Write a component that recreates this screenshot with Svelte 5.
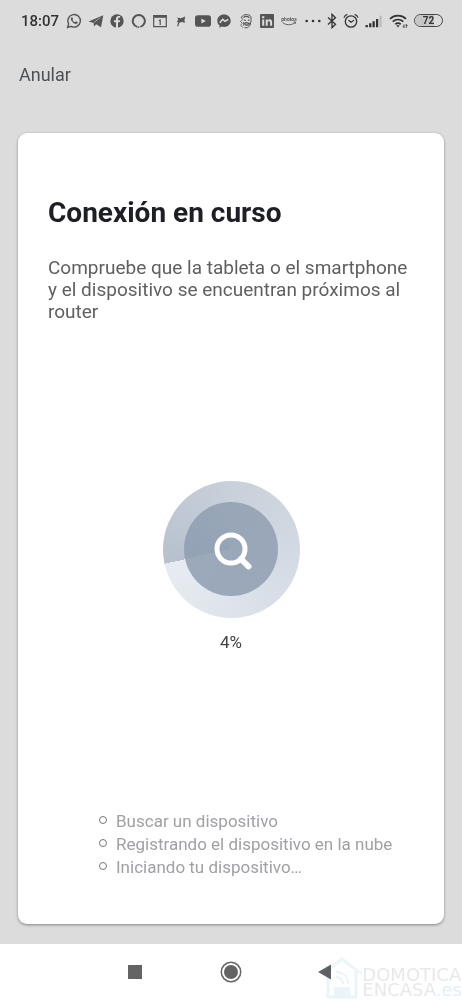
<script lang="ts">
  const title = "Conexión en curso";
  const steps = [
    "Buscar un dispositivo",
    "Registrando el dispositivo en la nube",
    "Iniciando tu dispositivo…"
  ];

  let progress = $state(4);
  let battery = $state(72);
</script>

<div class="screen">
  <header class="status">
    <time>18:07</time>

    <div class="apps">
      <svg viewBox="0 0 16 16" fill="none" stroke="currentColor">
        <path d="M1.600 14.400l1-3.500a6.300 6.300 0 1 1 2.400 2.400z" stroke-width="1.400" />
        <path d="M5.400 4.400c-1 1-.6 2.400.4 3.800 1.300 1.900 3.200 3 4.700 2.600 1-.3 1.400-1 1.200-1.600l-1.700-.9-1 1c-1.200-.5-2-1.300-2.500-2.400l.6-.9-.8-1.700z" fill="currentColor" stroke="none" />
      </svg>
      <svg viewBox="0 0 16 16" fill="currentColor">
        <path d="M.6 8.400L15.300 2.200 13 14.200 8.200 11.200 6 13.400 5.600 10z" />
        <path d="M5.700 9.700l6.500-4.900" stroke="#dcdcdc" stroke-width=".6" />
      </svg>
      <svg viewBox="0 0 16 16">
        <circle cx="8" cy="8" r="6.700" fill="currentColor" />
        <path d="M7 15V9.300H5V7.200h2V5.700c0-1.900 1-2.800 2.700-2.800h1.400v1.900h-1c-.8 0-1.100.4-1.100 1.100v1.300h2.100l-.4 2.100H9V15z" fill="#dcdcdc" />
      </svg>
      <svg viewBox="0 0 16 16" fill="none" stroke="currentColor" stroke-width="2">
        <path d="M6.300 13.900a6 6 0 1 1 3 0M7 13.700l1 .8" />
      </svg>
      <svg viewBox="0 0 16 16" fill="none" stroke="currentColor">
        <path d="M1.700 2.500h12.600v11.200H1.700z" stroke-width="1.200" />
        <path d="M1.700 3.500h12.600" stroke-width="2.600" />
        <path d="M6.800 7.800l1.400-.8v5" stroke-width="1.200" />
      </svg>
      <svg viewBox="0 0 16 16" fill="currentColor">
        <path d="M4.200 4.600l3.600.6 4.500-1.800-.9 3.800.7 2.600-3.200-.8-2.500.8-1.300 3.700-1-.3 1-3.900-1.500-.6 1.700-1.600z" />
      </svg>
      <svg viewBox="0 0 16 16">
        <rect x="0" y="2.300" width="16" height="11.400" rx="2.800" fill="currentColor" />
        <path d="M6.400 5.500v5L10.800 8z" fill="#dcdcdc" />
      </svg>
      <svg viewBox="0 0 16 16">
        <path d="M8 1.400c-3.800 0-6.700 2.700-6.700 6.300 0 2 .8 3.700 2.200 4.800v2.300l2.200-1.200c5 1.300 9-1.700 9-5.900 0-3.600-2.900-6.300-6.700-6.300z" fill="currentColor" />
        <path d="M3.700 9.700l3-3.300 2.400 2 3.200-2" fill="none" stroke="#dcdcdc" stroke-width="1.500" />
      </svg>
      <svg viewBox="0 0 16 16" fill="none" stroke="currentColor">
        <path d="M3.500 5C4 1.500 9 .8 12 2.500c1.700 1.500.7 3.300 1.100 5.100l-.9 4.400-2.500 2.700H6.500" />
        <path d="M5.500 4.500c2-1.600 4-1.200 6 .3M6 7l2 .5m2 0l1.500-.6M6.500 10.500c1.500-1 3-1 4.200 0l-1.200 1.700H7.800z" stroke-width="1.200" />
        <path d="M3.300 4.500l1.500 2-2.300 2 1.800 1.800-1.600 1.900L5 14.700M5.500 9l.3 4M12 9.500l-1.300 3" stroke-width=".8" />
      </svg>
      <svg viewBox="0 0 16 16">
        <rect x="1" y="1" width="14" height="14" rx="1" fill="currentColor" />
        <path d="M3.200 6.500h2v6.300h-2zM3.100 3.200h2.200v2.100H3.100zM6.700 6.500h2v.9c1.300-1.800 4.400-1.300 4.400 1.700v3.700h-2V9.600c0-2-2.400-1.900-2.400 0v3.200h-2z" fill="#dcdcdc" />
      </svg>
      <svg viewBox="0 0 16 16">
        <text x="8" y="7.500" text-anchor="middle" font-size="5" font-weight="700" fill="currentColor">photos</text>
        <path d="M1.500 9.500c3.500 2.900 8.800 2.900 12.200.4M12.400 9h2.300l-.8 2" fill="none" stroke="currentColor" stroke-width=".9" />
      </svg>
    </div>

    <div class="system">
      <svg width="16" height="16" fill="currentColor">
        <circle cx="1.700" cy="8" r="1.300" /><circle cx="8" cy="8" r="1.300" /><circle cx="14.300" cy="8" r="1.300" />
      </svg>
      <svg width="10" height="16" fill="none" stroke="currentColor" stroke-width="1.300">
        <path d="M1 4.500l7.500 6.800L5 14.700V1.300l3.500 3.400L1 11.500" />
      </svg>
      <svg width="16" height="16" fill="none" stroke="currentColor" stroke-width="1.300">
        <circle cx="8" cy="8.500" r="5.700" />
        <path d="M5.500 7.300L8 9.300l3-2M1 4.600C1.500 3 2.600 1.900 4.300 1.300M15 4.600c-.5-1.600-1.600-2.700-3.300-3.300" />
      </svg>
      <svg width="18" height="16" fill="currentColor">
        <path d="M.5 12h2.400v2.200H.5zM4.100 10.300h2.300v3.900H4.100zM7.500 8.300h2.300v5.900H7.500zM11 6h2.200v8.200H11z" />
        <path d="M14.600 2.700h2v11.500h-2z" fill="#b9b9b9" />
      </svg>
      <svg width="19" height="16" fill="none" stroke="currentColor" stroke-width="1.800">
        <path d="M1 5.800c4.500-4.200 11.500-4.200 16 0M3.700 8.700c3.200-2.900 7.400-2.900 10.600 0M6.300 11.200c1.700-1.400 3.700-1.400 5.400 0" />
        <path d="M7.300 12.300h3.400L9 14.400z" fill="currentColor" stroke="none" />
        <path d="M15 11.400v3.200m-1.200-1.200L15 14.700M17.300 14.700v-3.300l1.200 1.300" stroke-width=".9" />
      </svg>
      <span class="battery">
        <span class="charge" style="width: {battery}%"></span>
        <span class="level">{battery}</span>
      </span>
    </div>
  </header>

  <div class="toolbar">
    <button type="button">Anular</button>
  </div>

  <main class="card">
    <section>
      <h1>{title}</h1>
      <p>Compruebe que la tableta o el smartphone y el dispositivo se encuentran próximos al router</p>
    </section>

    <div class="progress" role="progressbar" aria-valuenow={progress} aria-label={title}>
      <div class="radar">
        <div class="disc">
          <svg width="46" height="46" viewBox="0 0 46 46" fill="none" stroke="#fff">
            <circle cx="23" cy="23" r="14" stroke-width="5" />
            <path d="M33 33L40.500 40.500" stroke-width="6" stroke-linecap="round" />
          </svg>
        </div>
      </div>
      <span>{progress}%</span>
    </div>

    <ul>
      {#each steps as step}
        <li>{step}</li>
      {/each}
    </ul>
  </main>

  <nav>
    <button type="button" aria-label="Recientes">
      <svg width="24" height="24"><path d="M5 5h14v14H5z" fill="currentColor" /></svg>
    </button>
    <button type="button" aria-label="Inicio">
      <svg width="24" height="24">
        <circle cx="12" cy="12" r="9.700" fill="none" stroke="currentColor" stroke-width="1.500" />
        <circle cx="12" cy="12" r="7" fill="currentColor" />
      </svg>
    </button>
    <button type="button" aria-label="Atrás">
      <svg width="24" height="24"><path d="M3 12L16 4.500v15z" fill="currentColor" /></svg>
    </button>

    <div class="watermark">
      <svg width="40" height="44" viewBox="0 0 40 44" fill="none" stroke="#e9f5f9" stroke-width="3">
        <path d="M6 41V17H2L20 3l17 13h-3v25z" />
        <path d="M12 31h16v11H12z" fill="#e9f5f9" stroke="none" />
        <path d="M14 16c7 0 12 5 12 12M14 21c4 0 7 3 7 7" stroke-width="2" />
      </svg>
      <div class="brand">
        <span>DOMOTICA</span>
        <span>ENCASA<b>.es</b></span>
      </div>
    </div>
  </nav>
</div>

<style>
  :global(body) {
    margin: 0;
  }

  .screen {
    display: flex;
    min-height: 100vh;
    flex-direction: column;
    background: #dcdcdc;
    color: #5f5f5f;
    font-family: Roboto, "Noto Sans", sans-serif;
  }

  button {
    padding: 0;
    border: 0;
    background: none;
    color: inherit;
    font: inherit;
    cursor: pointer;
  }

  svg {
    display: block;
    flex: none;
  }

  .status {
    display: flex;
    height: 41px;
    align-items: center;
    padding: 0 19px 0 21px;
    color: #333;
  }

  time {
    font-size: 15px;
    font-weight: 500;
  }

  .apps {
    display: flex;
    flex: 1;
    justify-content: space-between;
    margin: 0 8px 0 7px;
    color: #555;
  }

  .apps svg {
    width: 16px;
    height: 16px;
  }

  .system {
    display: flex;
    align-items: center;
    gap: 6px;
  }

  .battery {
    position: relative;
    box-sizing: border-box;
    width: 29px;
    height: 13px;
    overflow: hidden;
    border: 1px solid #444;
    border-radius: 7px;
    font-size: 10px;
    font-weight: 700;
    line-height: 11px;
    text-align: center;
  }

  .charge {
    position: absolute;
    inset: 0 auto 0 0;
    background: #c6c6c6;
  }

  .level {
    position: relative;
  }

  .toolbar {
    padding: 22px 19px 46px;
    color: #4c5054;
    font-size: 18px;
    line-height: 24px;
  }

  .toolbar button {
    display: block;
  }

  .card {
    display: flex;
    flex: 1;
    flex-direction: column;
    justify-content: space-between;
    margin: 0 18px 20px;
    padding: 63px 30px 45px;
    border-radius: 9px;
    background: #fff;
    box-shadow: 0 1px 3px rgba(0, 0, 0, 0.4);
  }

  h1 {
    margin: 0 0 27px;
    color: #1d1e26;
    font-size: 28px;
    font-weight: 700;
    line-height: 34px;
  }

  p {
    margin: 0;
    font-size: 19px;
    line-height: 22px;
  }

  .progress {
    display: flex;
    flex-direction: column;
    align-items: center;
    gap: 13px;
    color: #444;
    font-size: 17px;
    line-height: 22px;
  }

  .radar {
    display: grid;
    width: 137px;
    height: 137px;
    place-items: center;
    border-radius: 50%;
    background: conic-gradient(from 258deg, #b7c1ce, #c8d0da 100deg, #d3dae3 200deg, #e8ecf2);
  }

  .disc {
    display: grid;
    width: 94px;
    height: 94px;
    place-items: center;
    border-radius: 50%;
    background: conic-gradient(from 258deg, #93a2b5, #98a6b8 100deg, #9ba9bb);
  }

  ul {
    margin: 0;
    padding: 0 0 0 51px;
    color: #a0a0a5;
    font-size: 17px;
    line-height: 23px;
    list-style: none;
  }

  li {
    display: flex;
    align-items: center;
    gap: 9px;
  }

  li::before {
    box-sizing: border-box;
    width: 8px;
    height: 8px;
    flex: none;
    margin-bottom: 3px;
    border: 1px solid #77777c;
    border-radius: 50%;
    content: "";
  }

  nav {
    position: relative;
    display: flex;
    height: 56px;
    align-items: center;
    justify-content: center;
    gap: 72px;
    overflow: hidden;
    background: #fff;
    color: #646464;
  }

  .watermark {
    position: absolute;
    right: 0;
    bottom: 0;
    display: flex;
    align-items: center;
    color: #e8e8e8;
    mix-blend-mode: multiply;
    pointer-events: none;
  }

  .brand {
    display: flex;
    flex-direction: column;
    padding-top: 8px;
    font-family: "DejaVu Sans", sans-serif;
    font-size: 18px;
    line-height: 15px;
  }

  .brand b {
    color: #dff0f6;
    font-weight: 400;
  }
</style>
